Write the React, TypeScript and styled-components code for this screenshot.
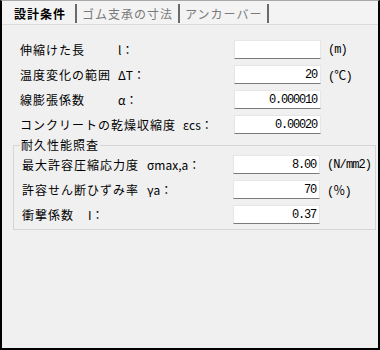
import React from "react";
import styled, { createGlobalStyle } from "styled-components";

interface ParamRow {
  name: string;
  sym: string;
  value: string;
  unit?: string;
  nameWidth?: number;
}

const topRows: ParamRow[] = [
  { name: "伸縮けた長", sym: "l：", value: "", unit: "(m)", nameWidth: 98 },
  { name: "温度変化の範囲", sym: "ΔT：", value: "20", unit: "(℃)", nameWidth: 98 },
  { name: "線膨張係数", sym: "α：", value: "0.000010", nameWidth: 98 },
  { name: "コンクリートの乾燥収縮度", sym: "εcs：", value: "0.00020" },
];

const groupRows: ParamRow[] = [
  { name: "最大許容圧縮応力度", sym: "σmax,a：", value: "8.00", unit: "(N/mm2)", nameWidth: 125 },
  { name: "許容せん断ひずみ率", sym: "γa：", value: "70", unit: "(％)", nameWidth: 125 },
  { name: "衝撃係数", sym: "I：", value: "0.37", nameWidth: 66 },
];

const tabs = ["設計条件", "ゴム支承の寸法", "アンカーバー"];

const App = () => {
  return (
    <>
      <GlobalStyle />
      <Frame>
        <TabStrip>
          {tabs.map((t, i) => (
            <Tab key={t} $active={i === 0} $first={i === 0}>
              {t}
            </Tab>
          ))}
          <TabFill />
        </TabStrip>
        <Body>
          {topRows.map(r => (
            <Row key={r.name} $indent={7}>
              <Label $width={214}>
                <Name $width={r.nameWidth}>{r.name}</Name>
                <Sym>{r.sym}</Sym>
              </Label>
              <Field>{r.value}</Field>
              {r.unit && <Unit>{r.unit}</Unit>}
            </Row>
          ))}
          <GroupBox>
            <GroupTitle>耐久性能照査</GroupTitle>
            <GroupRows>
              {groupRows.map(r => (
                <Row key={r.name} $indent={0}>
                  <Label $width={211}>
                    <Name $width={r.nameWidth}>{r.name}</Name>
                    <Sym>{r.sym}</Sym>
                  </Label>
                  <Field>{r.value}</Field>
                  {r.unit && <Unit>{r.unit}</Unit>}
                </Row>
              ))}
            </GroupRows>
          </GroupBox>
        </Body>
      </Frame>
    </>
  );
};

// Styled Components
const GlobalStyle = createGlobalStyle`
  body {
    margin: 0;
    font-family: "Noto Sans CJK JP", "Noto Sans", sans-serif;
    font-size: 12px;
    color: #000;
    background: #f0f0f0;
  }
`;

const Frame = styled.div`
  width: 380px;
  height: 350px;
  box-sizing: border-box;
  border: 2px solid #000;
  border-top: 1px solid #a8a8a8;
  background: #f0f0f0;
  display: flex;
  flex-direction: column;
`;

const TabStrip = styled.div`
  display: flex;
  height: 23px;
  align-items: flex-end;
  border-bottom: 1px solid #dcdcdc;
  background: #f3f3f3;
`;

const Tab = styled.div<{ $active?: boolean; $first?: boolean }>`
  display: flex;
  align-items: center;
  height: 19px;
  padding: ${p => (p.$first ? "0 9px 0 12px" : "0 5px 0 5px")};
  border-right: 2px solid #6a6a6a;
  letter-spacing: 1px;
  line-height: 14px;
  margin-bottom: 1px;
  color: ${p => (p.$active ? "#000" : "#7a7a7a")};
  font-weight: ${p => (p.$active ? 700 : 400)};
`;

const TabFill = styled.div`
  flex: 1;
`;

const Body = styled.div`
  display: flex;
  flex-direction: column;
  gap: 6px;
  padding: 15px 2px 0 11px;
`;

const Row = styled.div<{ $indent: number }>`
  display: flex;
  align-items: center;
  height: 19px;
  padding-left: ${p => p.$indent}px;
`;

const Label = styled.div<{ $width: number }>`
  display: flex;
  align-items: center;
  width: ${p => p.$width}px;
  flex-shrink: 0;
  letter-spacing: 1px;
  white-space: nowrap;
`;

const Name = styled.span<{ $width?: number }>`
  display: inline-block;
  ${p => (p.$width ? `width: ${p.$width}px;` : "margin-right: 7px;")}
`;

const Sym = styled.span`
  letter-spacing: 0;
`;

const Field = styled.div`
  width: 87px;
  height: 19px;
  box-sizing: border-box;
  background: #fff;
  border: 1px solid #e6e6e6;
  border-bottom-color: #7a7a7a;
  padding-right: 3px;
  display: flex;
  align-items: center;
  justify-content: flex-end;
  font-family: "Liberation Mono", "Noto Sans CJK JP", monospace;
  font-size: 12px;
  letter-spacing: -1.2px;
`;

const Unit = styled.span`
  margin-left: 7px;
  font-family: "Liberation Mono", "Noto Sans CJK JP", monospace;
  font-size: 12px;
  letter-spacing: -0.9px;
`;

const GroupBox = styled.fieldset`
  margin: -2px 0 0 0;
  padding: 3px 0 5px 8px;
  border: 1px solid #d5d5d5;
  min-inline-size: 0;
`;

const GroupTitle = styled.legend`
  padding: 0 1px;
  margin-left: -2px;
  line-height: 14px;
  letter-spacing: 1px;
`;

const GroupRows = styled.div`
  display: flex;
  flex-direction: column;
  gap: 6px;
`;

export default App;
